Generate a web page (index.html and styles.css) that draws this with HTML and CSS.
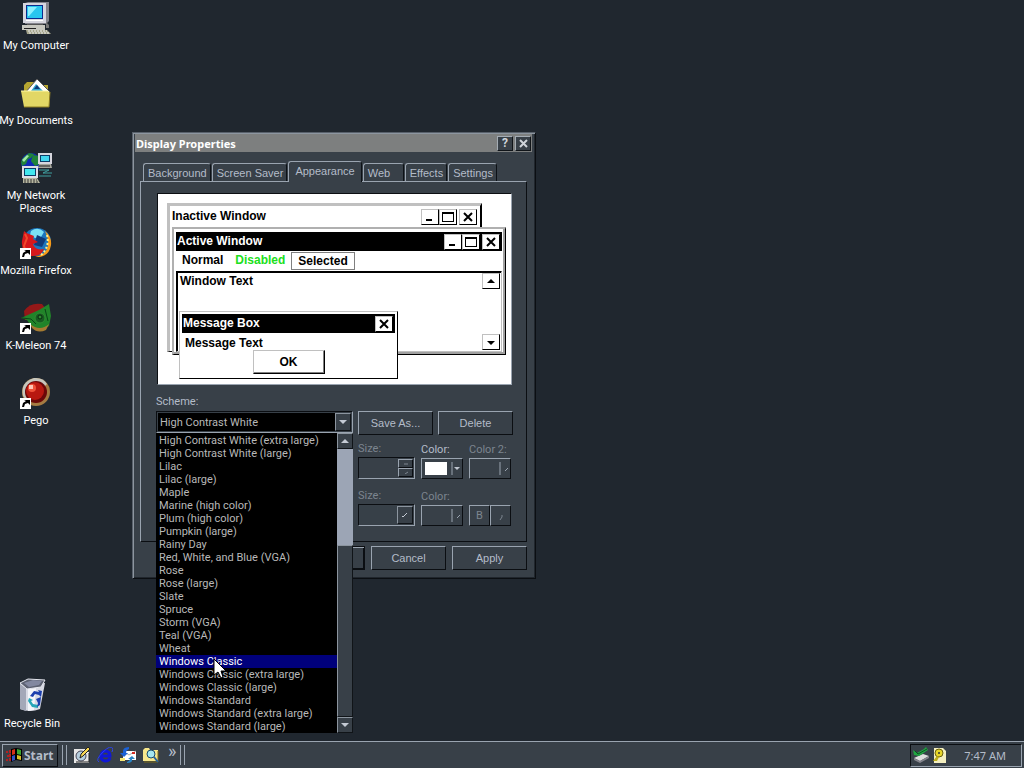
FILE: index.html
```html
<!DOCTYPE html>
<html lang="en">
<head>
    <meta charset="UTF-8">
    <meta name="viewport" content="width=device-width, initial-scale=1.0">
    <title>Desktop</title>
    <link rel="stylesheet" href="styles.css">
</head>
<body>
    <main class="desktop">
        <nav class="shortcuts">
            <a class="shortcut" href="#computer">
                <svg width="32" height="32" viewBox="0 0 32 32">
                    <path d="M5 1l3-1h21v19l-3 3H5z" fill="#84848c"/>
                    <path d="M3 1h23v20H3z" fill="#d6d6de"/>
                    <path d="M6 3h17v14H6z" fill="#0c2a8c"/>
                    <path d="M7 4h15v12H7z" fill="#29c6ef"/>
                    <path d="M8 5h9l-8 9H8z" fill="#8cf0ff"/>
                    <path d="M6 18h17v1H6z" fill="#fff"/>
                    <path d="M7 22h16v2H7z" fill="#555"/>
                    <path d="M2 23h23v5H2z" fill="#c8c8c0"/>
                    <path d="M4 26h12v1H4z" fill="#222"/>
                    <path d="M6 28h21l4 4H7z" fill="#a5a58c"/>
                    <path d="M8 29h19M9 31h20" stroke="#eee" stroke-dasharray="2 1"/>
                    <path d="M26 20l3 3v3h-3z" fill="#777"/>
                </svg>
                <span>My Computer</span>
            </a>
            <a class="shortcut" href="#documents">
                <svg width="32" height="32" viewBox="0 0 32 32">
                    <path d="M4 8l3-3h7l2 3h12v20H4z" fill="#b5a531"/>
                    <path d="M5 16L17 2l13 13-6 8H9z" fill="#fff" stroke="#555"/>
                    <path d="M11 14l5-7 7 7-3 4h-7z" fill="#31a5ce"/>
                    <path d="M14 12l3-4 3 4z" fill="#113a78"/>
                    <path d="M1 14h27l2 2-1 14H4z" fill="#e2d765"/>
                    <path d="M1 14h27" stroke="#fff7a5"/>
                    <path d="M4 30h25l1-15" fill="none" stroke="#8c7b21"/>
                </svg>
                <span>My&nbsp;Documents</span>
            </a>
            <a class="shortcut" href="#network">
                <svg width="32" height="32" viewBox="0 0 32 32">
                    <circle cx="11" cy="11" r="10" fill="#1029b5"/>
                    <path d="M3 6l6-5 5 1-3 4-3 1-2 5-4 2-1-4zM13 3l6 1 1 8-5 2-4-5z" fill="#21843a"/>
                    <path d="M2 8l5-5 2 1-5 6z" fill="#a0e8a8"/>
                    <path d="M18 1h14v11H18z" fill="#d6d6de"/>
                    <path d="M20 3h10v7H20z" fill="#0b3d68"/>
                    <path d="M21 4h8v5h-8z" fill="#42d6ef"/>
                    <path d="M19 12h12l1 4H18z" fill="#a5a59c"/>
                    <path d="M19 14h11" stroke="#222"/>
                    <path d="M2 14h16v12H2z" fill="#dedee7"/>
                    <path d="M4 16h12v8H4z" fill="#0b3d68"/>
                    <path d="M5 17h10v6H5z" fill="#42e7ef"/>
                    <path d="M3 26h14l3 5H3z" fill="#b5b5a0"/>
                    <path d="M4 28h13M4 30h14" stroke="#333" stroke-dasharray="2 1"/>
                    <path d="M19 18h10l-6 3h9M19 24h12" fill="none" stroke="#3fa0a0"/>
                </svg>
                <span>My Network Places</span>
            </a>
            <a class="shortcut" href="#firefox">
                <svg width="32" height="32" viewBox="0 0 32 32">
                    <circle cx="17" cy="15" r="14" fill="#1c75bd"/>
                    <path d="M11 4q7-5 13 1l-3 5-6 1-5-3z" fill="#7be0f4"/>
                    <path d="M17 8l9 4-4 8-8-2z" fill="#103a78"/>
                    <path d="M25 4q7 6 6 14-2 13-16 12 9-2 12-8 3-8-2-18z" fill="#f79a18"/>
                    <path d="M27 8q3 12-6 20" fill="none" stroke="#fff08a" stroke-width="2" stroke-dasharray="2 2"/>
                    <path d="M4 4q3 3 5 3l5 2-1 3 5 3-5 2q2 7 11 5-3 8-13 7Q1 26 2 14z" fill="#d6181c"/>
                    <path d="M5 7l2 4-3 8 2 6" fill="none" stroke="#f04a2c" stroke-width="2"/>
                    <path d="M0 21h11v11H0z" fill="#fff"/>
                    <path d="M2 30l1-4 3-2-2-1h6v5l-2-2-3 1-1 3z" fill="#000"/>
                </svg>
                <span>Mozilla&nbsp;Firefox</span>
            </a>
            <a class="shortcut" href="#kmeleon">
                <svg width="32" height="32" viewBox="0 0 32 32">
                    <path d="M4 9q6-9 18-7l6 8-8 8H5z" fill="#941818"/>
                    <path d="M1 16l18-8L29 2l2 12-2 10-8 5-9-4-5-7z" fill="#218429"/>
                    <path d="M10 22q10 8 19 0l-3 6q-8 4-14-2z" fill="#a57b31"/>
                    <circle cx="20" cy="16" r="5" fill="#185a21" stroke="#2f8c33"/>
                    <circle cx="20" cy="15" r="2" fill="#2d8a30" stroke="#082a10"/>
                    <path d="M2 16l9 1 5 5M25 7l3 12" fill="none" stroke="#0a4518"/>
                    <path d="M0 21h11v11H0z" fill="#fff"/>
                    <path d="M2 30l1-4 3-2-2-1h6v5l-2-2-3 1-1 3z" fill="#000"/>
                </svg>
                <span>K-Meleon 74</span>
            </a>
            <a class="shortcut" href="#pego">
                <svg width="32" height="32" viewBox="0 0 32 32">
                    <circle cx="16" cy="15" r="14" fill="#a57b42"/>
                    <path d="M3 19Q0 5 14 1q9-1 13 6L8 25z" fill="#c6c6bd"/>
                    <circle cx="16" cy="15" r="11" fill="#6b0808"/>
                    <circle cx="15" cy="14" r="9" fill="#b81810"/>
                    <circle cx="12" cy="11" r="4" fill="#ef5239"/>
                    <path d="M9 8h4v4H9z" fill="#ffc6b5"/>
                    <path d="M0 21h11v11H0z" fill="#fff"/>
                    <path d="M2 30l1-4 3-2-2-1h6v5l-2-2-3 1-1 3z" fill="#000"/>
                </svg>
                <span>Pego</span>
            </a>
            <a class="shortcut recycle" href="#recycle">
                <svg width="32" height="34" viewBox="0 0 32 34">
                    <path d="M4 6v25q10 4 20 0l5-26z" fill="#d8dae4"/>
                    <path d="M4 6v25l6 2V10z" fill="#a4a8b8"/>
                    <path d="M12 11v22l6-1 2-22z" fill="#f4f5fa"/>
                    <path d="M4 5l8-4 17 1-4 7-14 2z" fill="#5d6272" stroke="#e4e6ee"/>
                    <path d="M8 5l9-3 9 1-3 4-10 2z" fill="#8288a0"/>
                    <path d="M14 18l4-5 5 1-1-2 4 1-1 6-2-2-4-1-2 3z" fill="#1c3fae"/>
                    <path d="M13 20l4 2-2 1 2 3 5 1v3l-6-1-4-6z" fill="#27a6b8"/>
                    <path d="M25 19l-1 8-3 2 1-4-2-4z" fill="#1c3fae"/>
                </svg>
                <span>Recycle Bin</span>
            </a>
        </nav>

        <section class="dialog">
            <header class="titlebar">
                <h1>Display Properties</h1>
                <button class="cap" type="button" aria-label="Help">?</button>
                <button class="cap" type="button" aria-label="Close">
                    <svg width="9" height="9" viewBox="0 0 9 9"><path d="M1 1l7 7M8 1L1 8" stroke="currentColor" stroke-width="2"/></svg>
                </button>
            </header>
            <div class="tabs" role="tablist">
                <button class="tab" type="button" role="tab">Background</button>
                <button class="tab" type="button" role="tab">Screen Saver</button>
                <button class="tab active" type="button" role="tab" aria-selected="true">Appearance</button>
                <button class="tab" type="button" role="tab">Web</button>
                <button class="tab" type="button" role="tab">Effects</button>
                <button class="tab" type="button" role="tab">Settings</button>
            </div>
            <form class="panel">
                <div class="preview">
                    <div class="win win-inactive">
                        <div class="win-title">
                            <span>Inactive Window</span>
                            <svg class="box" viewBox="0 0 16 14"><path d="M4 9h6v2H4z"/></svg>
                            <svg class="box" viewBox="0 0 16 14"><path d="M2 2h12v10H2zM3 4v7h10V4z" fill-rule="evenodd"/></svg>
                            <svg class="box last" viewBox="0 0 16 14"><path d="M4 3l8 8M12 3l-8 8" stroke="#000" stroke-width="2"/></svg>
                        </div>
                    </div>
                    <div class="win win-active">
                        <div class="win-title dark">
                            <span>Active Window</span>
                            <svg class="box" viewBox="0 0 16 14"><path d="M4 9h6v2H4z"/></svg>
                            <svg class="box" viewBox="0 0 16 14"><path d="M2 2h12v10H2zM3 4v7h10V4z" fill-rule="evenodd"/></svg>
                            <svg class="box last" viewBox="0 0 16 14"><path d="M4 3l8 8M12 3l-8 8" stroke="#000" stroke-width="2"/></svg>
                        </div>
                        <div class="win-menu">
                            <span>Normal</span>
                            <span class="off">Disabled</span>
                            <span class="picked">Selected</span>
                        </div>
                        <div class="win-client">
                            <span>Window Text</span>
                            <div class="win-scroll">
                                <svg class="box" viewBox="0 0 16 14"><path d="M4 9h8L8 5z"/></svg>
                                <svg class="box" viewBox="0 0 16 14"><path d="M4 6h8l-4 4z"/></svg>
                            </div>
                        </div>
                    </div>
                    <div class="win win-message">
                        <div class="win-title dark">
                            <span>Message Box</span>
                            <svg class="box last" viewBox="0 0 16 14"><path d="M4 3l8 8M12 3l-8 8" stroke="#000" stroke-width="2"/></svg>
                        </div>
                        <p>Message Text</p>
                        <button class="ok" type="button">OK</button>
                    </div>
                </div>

                <label class="scheme-label" for="scheme">Scheme:</label>
                <div class="scheme-row">
                    <div class="combo">
                        <select id="scheme">
                            <option>High Contrast White</option>
                        </select>
                        <span class="arrow">
                            <svg width="8" height="4" viewBox="0 0 8 4"><path d="M0 0h8L4 4z" fill="currentColor"/></svg>
                        </span>
                        <div class="drop">
                            <select class="drop-list" size="23" aria-label="Schemes">
                                <option>High Contrast White (extra large)</option>
                                <option>High Contrast White (large)</option>
                                <option>Lilac</option>
                                <option>Lilac (large)</option>
                                <option>Maple</option>
                                <option>Marine (high color)</option>
                                <option>Plum (high color)</option>
                                <option>Pumpkin (large)</option>
                                <option>Rainy Day</option>
                                <option>Red, White, and Blue (VGA)</option>
                                <option>Rose</option>
                                <option>Rose (large)</option>
                                <option>Slate</option>
                                <option>Spruce</option>
                                <option>Storm (VGA)</option>
                                <option>Teal (VGA)</option>
                                <option>Wheat</option>
                                <option class="hot">Windows Classic</option>
                                <option>Windows Classic (extra large)</option>
                                <option>Windows Classic (large)</option>
                                <option>Windows Standard</option>
                                <option>Windows Standard (extra large)</option>
                                <option>Windows Standard (large)</option>
                            </select>
                            <div class="scroll">
                                <button class="arrow" type="button" aria-label="Scroll up">
                                    <svg width="8" height="4" viewBox="0 0 8 4"><path d="M0 4h8L4 0z" fill="currentColor"/></svg>
                                </button>
                                <div class="track"></div>
                                <div class="thumb"></div>
                                <button class="arrow" type="button" aria-label="Scroll down">
                                    <svg width="8" height="4" viewBox="0 0 8 4"><path d="M0 0h8L4 4z" fill="currentColor"/></svg>
                                </button>
                            </div>
                        </div>
                    </div>
                    <button class="btn" type="button">Save As...</button>
                    <button class="btn" type="button">Delete</button>
                </div>

                <div class="fields">
                    <div class="field size">
                        <label for="item-size">Size:</label>
                        <div class="spin">
                            <input id="item-size" type="text" disabled>
                            <div class="spin-buttons">
                                <button type="button" disabled aria-label="Increase"><svg width="6" height="3" viewBox="0 0 6 3"><path d="M1 2h4" stroke="currentColor"/></svg></button>
                                <button type="button" disabled aria-label="Decrease"><svg width="6" height="3" viewBox="0 0 6 3"><path d="M2 3l3-2" fill="none" stroke="currentColor"/></svg></button>
                            </div>
                        </div>
                    </div>
                    <div class="field">
                        <label class="on" for="item-color">Color:</label>
                        <button id="item-color" class="swatch" type="button">
                            <i class="chip"></i>
                            <svg width="11" height="13" viewBox="0 0 11 13"><path d="M1 0v13" stroke="#9aa4b0"/><path d="M3 5h6L6 8z" fill="#c0c6d0"/></svg>
                        </button>
                    </div>
                    <div class="field">
                        <label for="item-color2">Color 2:</label>
                        <button id="item-color2" class="swatch" type="button" disabled>
                            <svg width="11" height="13" viewBox="0 0 11 13"><path d="M1 0v13M6 9l3-3" stroke="#9aa4b0"/></svg>
                        </button>
                    </div>
                    <div class="field size">
                        <label for="font-size">Size:</label>
                        <div class="spin">
                            <select id="font-size" disabled></select>
                            <span class="arrow"><svg width="8" height="8" viewBox="0 0 8 8"><path d="M1 5l1 1 4-4" fill="none" stroke="currentColor"/></svg></span>
                        </div>
                    </div>
                    <div class="field">
                        <label for="font-color">Color:</label>
                        <button id="font-color" class="swatch" type="button" disabled>
                            <svg width="11" height="13" viewBox="0 0 11 13"><path d="M1 0v13M6 9l3-3" stroke="#9aa4b0"/></svg>
                        </button>
                    </div>
                    <div class="field styles">
                        <button type="button" disabled aria-label="Bold">B</button>
                        <button type="button" disabled aria-label="Italic"><svg width="6" height="10" viewBox="0 0 6 10"><path d="M4 4v2L2 9" fill="none" stroke="currentColor"/></svg></button>
                    </div>
                </div>
            </form>
            <footer class="actions">
                <button class="btn default" type="button">OK</button>
                <button class="btn" type="button">Cancel</button>
                <button class="btn" type="button">Apply</button>
            </footer>
        </section>

        <svg class="cursor" width="13" height="21" viewBox="0 0 13 21"><path d="M1 1v16l4-3 3 6 2-1-2-6h5z" fill="#fff" stroke="#000"/></svg>
    </main>

    <footer class="taskbar">
        <button class="start" type="button">
            <svg width="16" height="14" viewBox="0 0 16 14">
                <path d="M0 3h2v2H0zM1 7h2v2H1zM0 11h2v2H0zM3 2h2v3H3zM3 6h2v3H3zM3 10h2v3H3z" fill="#b52020"/>
                <path d="M5 1l5-1 6 1v12l-6-1-5 2z" fill="#000"/>
                <path d="M6 2l3-1v5L6 7z" fill="#d63118"/>
                <path d="M11 1l4 1v5l-4-1z" fill="#39a531"/>
                <path d="M6 8l3-1v5l-3 1z" fill="#3152c6"/>
                <path d="M11 7l4 1v4l-4-1z" fill="#d6bd29"/>
            </svg>
            Start
        </button>
        <i class="grip"></i>
        <div class="quick">
            <button type="button" aria-label="Show Desktop">
                <svg width="16" height="16" viewBox="0 0 16 16"><path d="M0 2h11v3h4v11H0z" fill="#e7e7e7"/><circle cx="7" cy="9" r="5" fill="#b5cede" stroke="#445"/><path d="M6 11l1-4 7-7 2 2-7 7z" fill="#f7d652" stroke="#222"/><path d="M2 15h13V6" fill="none" stroke="#222"/></svg>
            </button>
            <button type="button" aria-label="Internet Explorer">
                <svg width="16" height="16" viewBox="0 0 16 16"><path d="M13 11q-1 3-5 3-5-1-4-6 1-4 5-4 4 1 4 5H5" fill="none" stroke="#1018d6" stroke-width="3"/><path d="M2 15Q-2 13 6 5t10-3l-1 3" fill="none" stroke="#2c42ef"/></svg>
            </button>
            <button type="button" aria-label="Outlook Express">
                <svg width="16" height="16" viewBox="0 0 16 16"><path d="M3 4h13v9H3z" fill="#fff"/><path d="M3 4l6 4 7-4" fill="none" stroke="#aaa"/><path d="M12 5h3v2h-3z" fill="#d62a20"/><path d="M9 0Q2 0 3 6H0l4 4 4-4H6q0-3 3-4z" fill="#1c62d6"/><path d="M7 16q6 0 5-4h3l-3-3-4 3h2q0 2-3 3z" fill="#2985c7"/><path d="M0 11h5v3H0z" fill="#f7e773"/></svg>
            </button>
            <button type="button" aria-label="Search">
                <svg width="16" height="16" viewBox="0 0 16 16"><path d="M0 3l2-2h4l1 2h8v11H0z" fill="#f7e78c"/><path d="M15 4v11H1" fill="none" stroke="#7b6b18"/><circle cx="8" cy="7" r="4" fill="#a5e7ef" stroke="#184a6b"/><path d="M11 10l4 5" stroke="#29639c" stroke-width="2"/></svg>
            </button>
        </div>
        <span class="more">»</span>
        <i class="grip end"></i>
        <div class="tray">
            <svg width="16" height="16" viewBox="0 0 16 16"><path d="M1 11l9-4 6 2-9 5z" fill="#dedede"/><path d="M1 11l6 3v2l-6-3zM7 14l9-5v2l-9 5z" fill="#84848c"/><path d="M0 3l4 3 7-4 2-2 2 3-9 6-5-1z" fill="#21a542"/><path d="M2 4l3 3 9-5" fill="none" stroke="#0a5220"/></svg>
            <svg width="14" height="16" viewBox="0 0 14 16"><path d="M2 1h9l3 3v12H2z" fill="#f4efc0"/><circle cx="7" cy="6" r="4" fill="#e7d629" stroke="#6b6310"/><circle cx="7" cy="6" r="1" fill="#333"/><path d="M5 9l-4 5h4l2-4z" fill="#bdad18"/></svg>
            <time>7:47 AM</time>
        </div>
    </footer>
</body>
</html>
```

FILE: styles.css
```css
* {
    box-sizing: border-box;
}
body {
    background-color: #20272F;
    color: #B4BCC8;
    display: flex;
    flex-direction: column;
    font-family: Roboto, "Liberation Sans", sans-serif;
    font-size: 11px;
    height: 100vh;
    line-height: 13px;
    margin: 0;
    overflow: hidden;
}
button, input, select {
    background-color: #384048;
    border: 0;
    border-radius: 0;
    color: inherit;
    font: inherit;
    margin: 0;
    padding: 0;
}
svg {
    display: block;
    flex: none;
}
h1, p {
    margin: 0;
}

/* desktop icons */
.desktop {
    flex: 1;
    min-height: 0;
    position: relative;
}
.shortcuts {
    display: flex;
    flex-direction: column;
    height: 100%;
    padding: 2px 0 11px;
    width: 72px;
}
.shortcut {
    align-items: center;
    color: #FFFFFF;
    display: flex;
    flex-direction: column;
    gap: 5px;
    height: 75px;
    text-align: center;
    text-decoration: none;
}
.recycle {
    height: auto;
    margin-top: auto;
    width: 64px;
}

/* dialog */
.dialog {
    background-color: #384048;
    border: 1px solid;
    border-color: #59616B #0B0E12 #0B0E12 #59616B;
    box-shadow: inset 1px 1px #8C959F, inset -1px -1px #20262D;
    left: 132px;
    padding: 1px 3px 8px 2px;
    position: absolute;
    top: 132px;
    width: 404px;
}
.titlebar {
    align-items: center;
    background-color: #7D7F7F;
    display: flex;
    height: 18px;
    padding-right: 1px;
}
.titlebar h1 {
    color: #FFFFFF;
    flex: 1;
    font-family: "Noto Sans", sans-serif;
    font-size: 11px;
    font-weight: bold;
    padding-left: 1px;
}
.cap {
    align-items: center;
    border: 1px solid;
    border-color: #A4ACB4 #101418 #101418 #A4ACB4;
    color: #D0D4DA;
    display: flex;
    font-size: 12px;
    font-weight: bold;
    height: 15px;
    justify-content: center;
    margin-left: 2px;
    width: 16px;
}
.tabs {
    align-items: flex-end;
    display: flex;
    gap: 1px;
    margin-top: 9px;
    padding-left: 8px;
}
.tab {
    border: 1px solid;
    border-bottom: 0;
    border-color: #9AA4B0 #0D1116 #9AA4B0 #9AA4B0;
    border-radius: 3px 3px 0 0;
    font-family: "Liberation Sans", Arial, sans-serif;
    height: 18px;
    min-width: 41px;
    padding: 1px 3px 0 4px;
    text-align: left;
}
.tab.active {
    height: 21px;
    margin-bottom: -1px;
    padding: 0 6px 2px;
    position: relative;
}
.panel {
    border: 1px solid;
    border-color: #9AA4B0 #0B0E12 #0B0E12 #9AA4B0;
    height: 361px;
    margin: 0 5px;
    padding: 11px 13px 0 15px;
}

/* preview of the window colours */
.preview {
    background-color: #FFFFFF;
    border: 1px solid;
    border-color: #0B0E12 #9AA4B0 #9AA4B0 #0B0E12;
    color: #000000;
    font-family: "Liberation Sans", Arial, sans-serif;
    font-size: 12px;
    font-weight: bold;
    height: 192px;
    margin: 0 1px;
    position: relative;
}
.win {
    background-color: #FFFFFF;
    border: 1px solid;
    border-color: #C0C0C0 #000000 #000000 #C0C0C0;
    padding: 2px;
    position: absolute;
}
.win-inactive {
    border-left-width: 3px;
    border-right-width: 2px;
    border-top-width: 3px;
    height: 149px;
    left: 9px;
    padding: 1px;
    top: 9px;
    width: 315px;
}
.win-active {
    border-color: #B0B0B0 #000000 #000000 #B0B0B0;
    border-width: 2px 1px 1px 2px;
    box-shadow: inset -2px -2px #A0A0A0;
    height: 128px;
    left: 14px;
    padding: 3px 3px 3px 2px;
    top: 33px;
    width: 334px;
}
.win-message {
    height: 68px;
    left: 21px;
    top: 117px;
    width: 219px;
}
.win-title {
    align-items: center;
    display: flex;
    height: 19px;
    padding: 0 2px 0 1px;
}
.win-title span {
    flex: 1;
}
.dark {
    background-color: #000000;
    color: #FFFFFF;
}
.box {
    background-color: #FFFFFF;
    border: 1px solid;
    border-color: #C0C0C0 #000000 #000000 #C0C0C0;
    height: 16px;
    width: 18px;
}
.box.last {
    margin-left: 2px;
}
.win-menu {
    display: flex;
    height: 20px;
    line-height: 19px;
}
.win-menu span {
    padding: 0 6px;
}
.win-menu .off {
    color: #20E020;
}
.win-menu .picked {
    border: 1px solid #808080;
    line-height: 17px;
    margin: 1px 0;
}
.win-client {
    border: 1px solid;
    border-color: #000000 #C0C0C0 #C0C0C0 #000000;
    box-shadow: inset 1px 1px #000000;
    display: flex;
    height: 81px;
    justify-content: space-between;
    padding: 1px;
}
.win-client > span {
    padding: 2px;
}
.win-scroll {
    display: flex;
    flex-direction: column;
    justify-content: space-between;
}
.win-message p {
    padding: 4px 3px 0;
}
.ok {
    background-color: #FFFFFF;
    border: 1px solid;
    border-color: #C0C0C0 #000000 #000000 #C0C0C0;
    box-shadow: inset -1px -1px #808080;
    display: block;
    height: 24px;
    margin: 0 auto;
    width: 72px;
}

/* scheme picker */
.scheme-label {
    display: block;
    margin: 10px 0 3px;
}
.scheme-row {
    display: flex;
    gap: 5px;
}
.combo {
    border: 1px solid;
    border-color: #0B0E12 #9AA4B0 #9AA4B0 #0B0E12;
    display: flex;
    flex: 1;
    height: 22px;
    padding: 1px;
    position: relative;
}
.combo select {
    appearance: none;
    background-color: #000000;
    color: #B8B8B8;
    flex: 1;
    min-width: 0;
    padding-left: 2px;
}
.arrow {
    align-items: center;
    background-color: #384048;
    border: 1px solid;
    border-color: #8C959F #101418 #101418 #8C959F;
    color: #C4CAD4;
    display: flex;
    flex: none;
    justify-content: center;
    width: 16px;
}
.drop {
    background-color: #000000;
    display: flex;
    height: 300px;
    left: -1px;
    position: absolute;
    right: -1px;
    top: 21px;
    z-index: 1;
}
.combo .drop-list {
    height: 300px;
    outline: 0;
    overflow: hidden;
    padding: 1px 0 0;
}
.drop-list option {
    height: 13px;
    line-height: 13px;
    min-height: 13px;
    padding: 0 3px;
}
.drop-list .hot {
    background-color: #00007B;
    color: #FFFFFF;
}
.scroll {
    display: flex;
    flex-direction: column;
    width: 16px;
}
.scroll .arrow {
    height: 16px;
}
.track {
    background-color: #9CA5B5;
    flex: 97;
}
.thumb {
    background-color: #384048;
    border: 1px solid;
    border-color: #8C959F #101418 #101418 #8C959F;
    flex: 171;
}
.btn {
    border: 1px solid;
    border-color: #9AA4B0 #0B0E12 #0B0E12 #9AA4B0;
    font-family: "Liberation Sans", Arial, sans-serif;
    height: 24px;
    width: 75px;
}

/* size and colour fields */
.fields {
    display: grid;
    gap: 10px 6px;
    grid-template-columns: 57px 42px 42px;
    justify-content: end;
    margin: 7px 2px 0 0;
}
.field {
    color: #7C858F;
    display: flex;
    flex-direction: column;
    gap: 2px;
    justify-content: flex-end;
    white-space: nowrap;
}
.field .on {
    color: #B4BCC8;
}
.spin {
    border: 1px solid;
    border-color: #0B0E12 #9AA4B0 #9AA4B0 #0B0E12;
    display: flex;
    height: 22px;
    padding: 1px;
}
.spin input, .spin select {
    appearance: none;
    flex: 1;
    min-width: 0;
}
.spin-buttons {
    display: flex;
    flex-direction: column;
    width: 15px;
}
.spin-buttons button {
    align-items: center;
    border: 1px solid;
    border-color: #9AA4B0 #0B0E12 #0B0E12 #9AA4B0;
    display: flex;
    flex: 1;
    justify-content: center;
}
.swatch {
    align-items: center;
    border: 1px solid;
    border-color: #9AA4B0 #0B0E12 #0B0E12 #9AA4B0;
    display: flex;
    gap: 4px;
    height: 21px;
    justify-content: flex-end;
}
.chip {
    background-color: #FFFFFF;
    height: 13px;
    width: 22px;
}
.styles {
    align-items: flex-end;
    flex-direction: row;
    gap: 0;
}
.styles button {
    align-items: center;
    border: 1px solid;
    border-color: #9AA4B0 #0B0E12 #0B0E12 #9AA4B0;
    display: flex;
    flex: 1;
    height: 21px;
    justify-content: center;
}
.actions {
    display: flex;
    gap: 6px;
    justify-content: flex-end;
    padding: 4px 5px 0;
}
.default {
    border-color: #0B0E12;
    box-shadow: inset 1px 1px #9AA4B0, inset -1px -1px #0B0E12;
}
.cursor {
    left: 213px;
    position: absolute;
    top: 658px;
    z-index: 2;
}

/* taskbar */
.taskbar {
    align-items: center;
    background-color: #384048;
    border-top: 1px solid #9AA4B0;
    display: flex;
    height: 27px;
    padding: 0 2px;
}
.start {
    align-items: center;
    border: 1px solid;
    border-color: #9AA4B0 #0B0E12 #0B0E12 #9AA4B0;
    display: flex;
    font-family: "Noto Sans", sans-serif;
    font-size: 12px;
    font-weight: bold;
    gap: 2px;
    height: 23px;
    padding: 0 3px;
    width: 56px;
}
.grip {
    border-left: 1px solid #9AA4B0;
    border-right: 1px solid #9AA4B0;
    height: 20px;
    margin-left: 4px;
    width: 5px;
}
.quick {
    display: flex;
    gap: 7px;
    margin-left: 7px;
}
.quick button {
    background-color: transparent;
}
.more {
    align-self: flex-start;
    font-size: 18px;
    margin: 2px 0 0 9px;
}
.tray {
    align-items: center;
    border: 1px solid;
    border-color: #0B0E12 #9AA4B0 #9AA4B0 #0B0E12;
    display: flex;
    font-family: "Noto Sans", sans-serif;
    gap: 3px;
    height: 23px;
    margin-left: auto;
    padding: 0 15px 0 2px;
    width: 112px;
}
.tray time {
    margin-left: auto;
}
```
